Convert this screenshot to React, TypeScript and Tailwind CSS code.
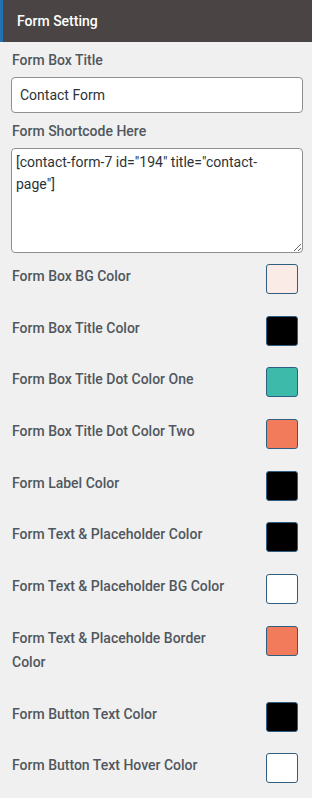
import React from "react";

const colorRows = [
    { label: "Form Box BG Color", color: "#fbebe7" },
    { label: "Form Box Title Color", color: "#000000" },
    { label: "Form Box Title Dot Color One", color: "#3dbaa9" },
    { label: "Form Box Title Dot Color Two", color: "#f27b5c" },
    { label: "Form Label Color", color: "#000000" },
    { label: "Form Text & Placeholder Color", color: "#000000" },
    { label: "Form Text & Placeholder BG Color", color: "#ffffff" },
    { label: "Form Text & Placeholde Border Color", color: "#f27b5c" },
    { label: "Form Button Text Color", color: "#000000" },
    { label: "Form Button Text Hover Color", color: "#ffffff" },
];

const ColorRow = ({ label, color }: { label: string; color: string }) => {
    return (
        <div className="flex items-start justify-between mb-[21.7px]">
            <span className="w-[220px] text-[14px] leading-[24px] pb-[6px] font-medium text-[#50575e]">
                {label}
            </span>
            <span
                className="w-[32px] h-[30px] mr-[3px] rounded-[3px] border border-[#2f5f80]"
                style={{ backgroundColor: color }}
            ></span>
        </div>
    );
};

const App = () => {
    return (
        <div
            className="w-[312px] min-h-[798px] bg-[#f0f0f0]"
            style={{ fontFamily: "Roboto, 'Liberation Sans', sans-serif" }}
        >
            <div className="h-[42px] bg-[#4a4544] border-l-[3px] border-[#2271b1] flex items-center pl-[14px]">
                <span className="text-white text-[14px] font-medium">Form Setting</span>
            </div>

            <div className="px-[11px] pt-[6px]">
                <label className="block pl-[1px] text-[14px] leading-[24px] font-medium text-[#50575e]">
                    Form Box Title
                </label>
                <input
                    className="mt-[5px] w-[292px] h-[36px] px-[8px] bg-white border border-[#8c8f94] rounded-[4px] text-[14px] text-[#2c3338] outline-none"
                    defaultValue="Contact Form"
                />

                <label className="block mt-[6px] pl-[1px] text-[14px] leading-[24px] font-medium text-[#50575e]">
                    Form Shortcode Here
                </label>
                <textarea
                    className="block mt-[5px] w-[292px] h-[105px] pl-[4px] pr-[30px] py-[2px] bg-white border border-[#8c8f94] rounded-[4px] text-[14px] leading-[22px] text-[#2c3338] outline-none"
                    defaultValue={'[contact-form-7 id="194" title="contact-page"]'}
                />

                <div className="mt-[11px] pl-[1px]">
                    {colorRows.map((row) => (
                        <ColorRow key={row.label} label={row.label} color={row.color} />
                    ))}
                </div>
            </div>
        </div>
    );
};

export default App;
